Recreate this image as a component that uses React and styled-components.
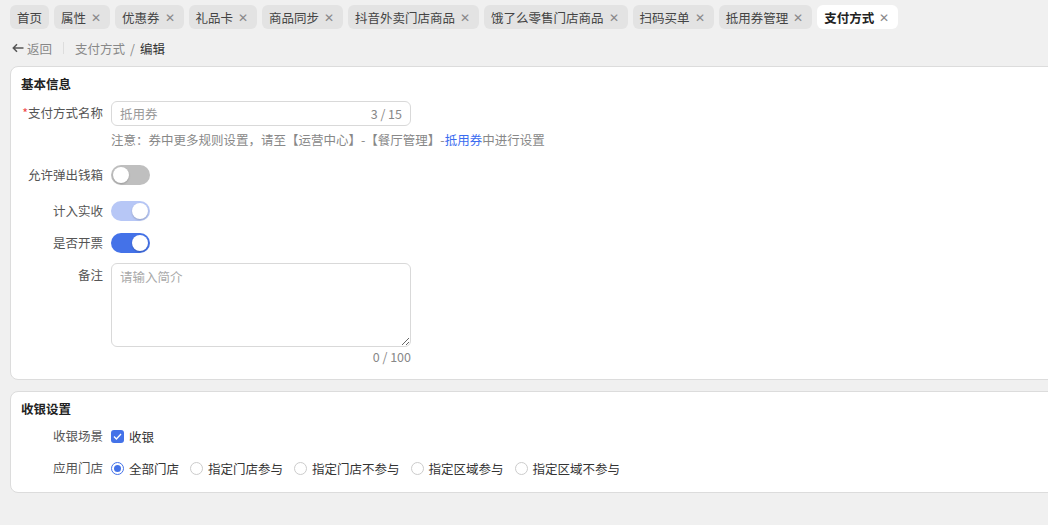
import React from 'react';
import styled, { createGlobalStyle } from 'styled-components';

const BLUE = '#4472e8';

const GlobalStyle = createGlobalStyle`
  html, body {
    margin: 0;
    padding: 0;
    background: #f0f0f0;
    overflow: hidden;
  }
  body {
    font-family: "Noto Sans CJK SC", "Noto Sans", sans-serif;
    font-size: 12.5px;
    color: #333;
  }
`;

const Page = styled.div`
  width: 1048px;
  height: 525px;
  overflow: hidden;
`;

const TabBar = styled.div`
  display: flex;
  gap: 5px;
  padding: 5px 0 0 10px;
`;

const Tab = styled.div`
  display: flex;
  align-items: center;
  gap: 5px;
  height: 24px;
  padding: ${(p) => (p.$closable ? '0 9px 0 7px' : '0 7px')};
  border-radius: 6px;
  background: ${(p) => (p.$active ? '#fff' : '#e3e3e3')};
  color: ${(p) => (p.$active ? '#222' : '#444')};
  font-weight: ${(p) => (p.$active ? 600 : 400)};
  white-space: nowrap;
  box-sizing: border-box;
`;

const Close = styled.span`
  color: #888;
  font-size: 12px;
  line-height: 1;
  font-weight: 400;
`;

const Crumbs = styled.div`
  display: flex;
  align-items: center;
  height: 22px;
  margin: 8px 0 7px 12px;
  color: #888;
`;

const Back = styled.span`
  display: flex;
  align-items: center;
  gap: 3px;
`;

const Divider = styled.span`
  width: 1px;
  height: 12px;
  background: #ddd;
  margin: 0 11px;
`;

const Current = styled.span`
  color: #333;
`;

const Slash = styled.span`
  margin: 0 5px;
`;

const Card = styled.section`
  margin: 0 -20px 11px 10px;
  background: #fff;
  border: 1px solid #dcdcdc;
  border-radius: 8px;
  padding: 8px 10px ${(p) => p.$pb}px;
`;

const Title = styled.h3`
  margin: 0 0 8px;
  font-size: 12.5px;
  font-weight: 700;
  color: #222;
  line-height: 18px;
`;

const Row = styled.div`
  display: flex;
  align-items: ${(p) => (p.$top ? 'flex-start' : 'center')};
  margin-top: ${(p) => p.$mt || 0}px;
`;

const Label = styled.label`
  width: 82px;
  flex: none;
  text-align: right;
  padding-right: 8px;
  color: #555;
  line-height: 20px;
  white-space: nowrap;
  padding-top: ${(p) => (p.$top ? 2 : 0)}px;
`;

const Required = styled.span`
  color: #f04848;
`;

const Field = styled.div`
  display: flex;
  flex-direction: column;
`;

const InputBox = styled.div`
  display: flex;
  align-items: center;
  justify-content: space-between;
  width: 300px;
  height: 25px;
  box-sizing: border-box;
  border: 1px solid #d9d9d9;
  border-radius: 6px;
  padding: 0 8px;
  color: #999;
`;

const Counter = styled.span`
  color: #888;
`;

const Note = styled.div`
  margin-top: 5px;
  color: #888;
  line-height: 18px;
`;

const Link = styled.span`
  color: #3b6cf0;
`;

const Switch = styled.span`
  position: relative;
  display: inline-block;
  width: 39px;
  height: 20px;
  border-radius: 10px;
  background: ${(p) => (p.$on ? (p.$disabled ? '#b7c7f6' : BLUE) : '#bfbfbf')};

  &::after {
    content: '';
    position: absolute;
    top: 2px;
    left: ${(p) => (p.$on ? 21 : 2)}px;
    width: 16px;
    height: 16px;
    border-radius: 50%;
    background: #fff;
    box-shadow: 0 1px 2px rgba(0, 0, 0, 0.2);
  }
`;

const TextArea = styled.textarea`
  width: 300px;
  height: 84px;
  box-sizing: border-box;
  border: 1px solid #d9d9d9;
  border-radius: 6px;
  padding: 3px 8px;
  font-family: inherit;
  font-size: 12.5px;
  resize: vertical;
  outline: none;

  &::placeholder {
    color: #aaa;
  }
`;

const TextCount = styled.div`
  text-align: right;
  color: #888;
  margin-top: 1px;
  line-height: 18px;
`;

const Options = styled.div`
  display: flex;
  align-items: center;
  gap: 11px;
`;

const Option = styled.span`
  display: flex;
  align-items: center;
  gap: 5px;
  color: #333;
`;

const Check = styled.span`
  display: flex;
  align-items: center;
  justify-content: center;
  width: 13px;
  height: 13px;
  border-radius: 3px;
  background: ${BLUE};
`;

const Radio = styled.span`
  width: 13px;
  height: 13px;
  box-sizing: border-box;
  border-radius: 50%;
  border: 1px solid ${(p) => (p.$on ? BLUE : '#ccc')};
  display: flex;
  align-items: center;
  justify-content: center;

  &::after {
    content: '';
    width: 7px;
    height: 7px;
    border-radius: 50%;
    background: ${(p) => (p.$on ? BLUE : 'transparent')};
  }
`;

const tabs = [
  '首页', '属性', '优惠券', '礼品卡', '商品同步', '抖音外卖门店商品',
  '饿了么零售门店商品', '扫码买单', '抵用券管理', '支付方式',
];

const stores = ['全部门店', '指定门店参与', '指定门店不参与', '指定区域参与', '指定区域不参与'];

const App = () => (
  <Page>
    <GlobalStyle />
    <TabBar>
      {tabs.map((t, i) => (
        <Tab key={t} $closable={i > 0} $active={t === '支付方式'}>
          {t}
          {i > 0 && <Close>✕</Close>}
        </Tab>
      ))}
    </TabBar>

    <Crumbs>
      <Back>
        <svg width="12" height="10" viewBox="0 0 12 10" fill="none" stroke="#555" strokeWidth="1.5">
          <path d="M11.5 5H1.5M5 1.3L1.3 5 5 8.7" />
        </svg>
        返回
      </Back>
      <Divider />
      支付方式<Slash>/</Slash><Current>编辑</Current>
    </Crumbs>

    <Card $pb={13}>
      <Title>基本信息</Title>
      <Row $top>
        <Label $top><Required>*</Required>支付方式名称</Label>
        <Field>
          <InputBox>抵用券<Counter>3 / 15</Counter></InputBox>
          <Note>
            注意：券中更多规则设置，请至【运营中心】-【餐厅管理】-<Link>抵用券</Link>中进行设置
          </Note>
        </Field>
      </Row>
      <Row $mt={16}>
        <Label>允许弹出钱箱</Label>
        <Switch />
      </Row>
      <Row $mt={16}>
        <Label>计入实收</Label>
        <Switch $on $disabled />
      </Row>
      <Row $mt={12}>
        <Label>是否开票</Label>
        <Switch $on />
      </Row>
      <Row $top $mt={10}>
        <Label $top>备注</Label>
        <Field>
          <TextArea placeholder="请输入简介" />
          <TextCount>0 / 100</TextCount>
        </Field>
      </Row>
    </Card>

    <Card $pb={14}>
      <Title>收银设置</Title>
      <Row $mt={7}>
        <Label>收银场景</Label>
        <Option>
          <Check>
            <svg width="9" height="7" viewBox="0 0 9 7" fill="none" stroke="#fff" strokeWidth="1.3">
              <path d="M1 3.5L3.4 6 8 1" />
            </svg>
          </Check>
          收银
        </Option>
      </Row>
      <Row $mt={12}>
        <Label>应用门店</Label>
        <Options>
          {stores.map((s, i) => (
            <Option key={s}>
              <Radio $on={i === 0} />
              {s}
            </Option>
          ))}
        </Options>
      </Row>
    </Card>
  </Page>
);

export default App;
